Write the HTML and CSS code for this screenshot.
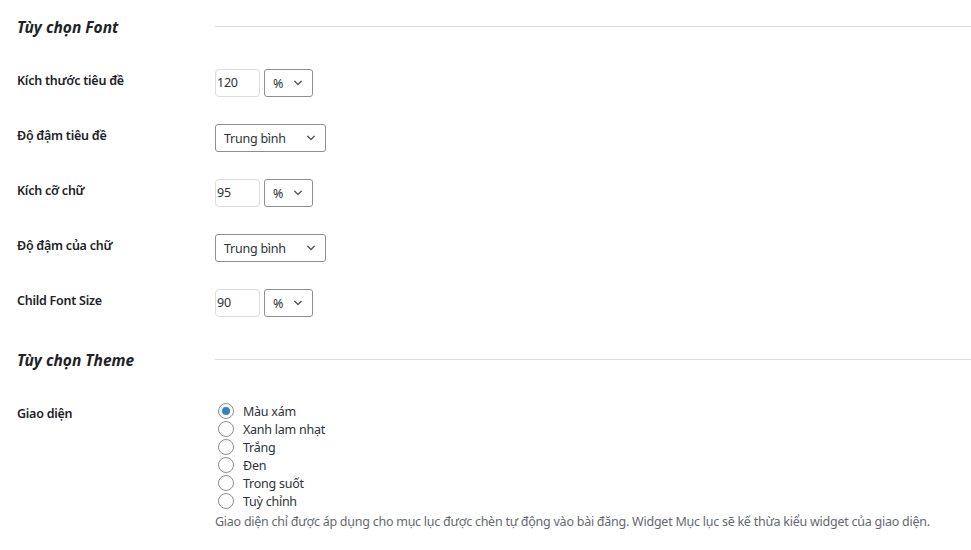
FILE: index.html
```html
<!DOCTYPE html>
<html lang="vi">

<head>
    <meta charset="UTF-8">
    <meta name="viewport" content="width=device-width, initial-scale=1.0">
    <title>Tùy chọn</title>
    <link rel="stylesheet" href="styles.css">
</head>

<body>

    <!-- Font options -->
    <div class="section-head">
        <h3>Tùy chọn Font</h3>
        <div class="rule"></div>
    </div>

    <div class="form-rows">
        <div class="row">
            <div class="label">Kích thước tiêu đề</div>
            <div class="field">
                <div class="text-input">120</div>
                <div class="select small">
                    <span>%</span>
                    <svg viewBox="0 0 20 20"><path d="M5 6l5 5 5-5 2 1-7 7-7-7 2-1z" /></svg>
                </div>
            </div>
        </div>

        <div class="row">
            <div class="label">Độ đậm tiêu đề</div>
            <div class="field">
                <div class="select wide">
                    <span>Trung bình</span>
                    <svg viewBox="0 0 20 20"><path d="M5 6l5 5 5-5 2 1-7 7-7-7 2-1z" /></svg>
                </div>
            </div>
        </div>

        <div class="row">
            <div class="label">Kích cỡ chữ</div>
            <div class="field">
                <div class="text-input">95</div>
                <div class="select small">
                    <span>%</span>
                    <svg viewBox="0 0 20 20"><path d="M5 6l5 5 5-5 2 1-7 7-7-7 2-1z" /></svg>
                </div>
            </div>
        </div>

        <div class="row">
            <div class="label">Độ đậm của chữ</div>
            <div class="field">
                <div class="select wide">
                    <span>Trung bình</span>
                    <svg viewBox="0 0 20 20"><path d="M5 6l5 5 5-5 2 1-7 7-7-7 2-1z" /></svg>
                </div>
            </div>
        </div>

        <div class="row">
            <div class="label">Child Font Size</div>
            <div class="field">
                <div class="text-input">90</div>
                <div class="select small">
                    <span>%</span>
                    <svg viewBox="0 0 20 20"><path d="M5 6l5 5 5-5 2 1-7 7-7-7 2-1z" /></svg>
                </div>
            </div>
        </div>
    </div>

    <!-- Theme options -->
    <div class="section-head theme-head">
        <h3>Tùy chọn Theme</h3>
        <div class="rule"></div>
    </div>

    <div class="row theme-row">
        <div class="label">Giao diện</div>
        <div class="field-col">
            <label class="radio"><span class="dot checked"></span>Màu xám</label>
            <label class="radio"><span class="dot"></span>Xanh lam nhạt</label>
            <label class="radio"><span class="dot"></span>Trắng</label>
            <label class="radio"><span class="dot"></span>Đen</label>
            <label class="radio"><span class="dot"></span>Trong suốt</label>
            <label class="radio"><span class="dot"></span>Tuỳ chỉnh</label>
            <p class="description">Giao diện chỉ được áp dụng cho mục lục được chèn tự động vào bài đăng. Widget Mục lục sẽ kế thừa kiểu widget của giao diện.</p>
        </div>
    </div>

</body>

</html>
```

FILE: styles.css
```css
body {
    font-family: "Noto Sans", sans-serif;
    font-size: 12.5px;
    letter-spacing: -0.25px;
    color: #1d2327;
    margin: 0;
    padding: 17px 0 0 17px;
    background-color: #fff;
}

.section-head {
    display: flex;
    align-items: center;
    height: 20px;
}

.section-head h3 {
    width: 198px;
    margin: 0;
    font-size: 15.5px;
    font-style: italic;
    font-weight: 700;
    line-height: 20px;
    letter-spacing: 0;
    flex-shrink: 0;
}

.rule {
    flex: 1;
    border-top: 1px solid #dcdcde;
    margin-top: -2px;
}

.form-rows {
    margin-top: 32px;
}

.row {
    display: flex;
    height: 55px;
}

.label {
    width: 198px;
    flex-shrink: 0;
    padding-top: 3px;
    font-weight: 600;
    line-height: 17px;
}

.field {
    display: flex;
    gap: 4px;
}

.text-input {
    width: 41px;
    height: 26px;
    border: 1px solid #dcdcde;
    border-radius: 4px;
    padding: 0 1px;
    line-height: 26px;
    color: #2c3338;
}

.select {
    display: flex;
    align-items: center;
    justify-content: space-between;
    height: 26px;
    border: 1px solid #8c8f94;
    border-radius: 3px;
    padding: 0 8px 0 8px;
    color: #2c3338;
}

.select svg {
    width: 12px;
    height: 12px;
    fill: #50575e;
}

.select.small {
    width: 31px;
}

.select.wide {
    width: 93px;
}

.theme-head {
    margin-top: 6px;
}

.theme-row {
    margin-top: 32px;
    height: auto;
}

.field-col {
    display: flex;
    flex-direction: column;
}

.radio {
    display: flex;
    align-items: center;
    height: 18px;
    color: #2c3338;
}

.dot {
    width: 14px;
    height: 14px;
    border: 1px solid #8c8f94;
    border-radius: 50%;
    margin: 0 9px 0 3px;
    display: flex;
    align-items: center;
    justify-content: center;
}

.dot.checked::after {
    content: "";
    width: 8px;
    height: 8px;
    border-radius: 50%;
    background-color: #3582c4;
}

.description {
    margin: 2px 0 0 0;
    line-height: 20px;
    color: #646970;
}
```
